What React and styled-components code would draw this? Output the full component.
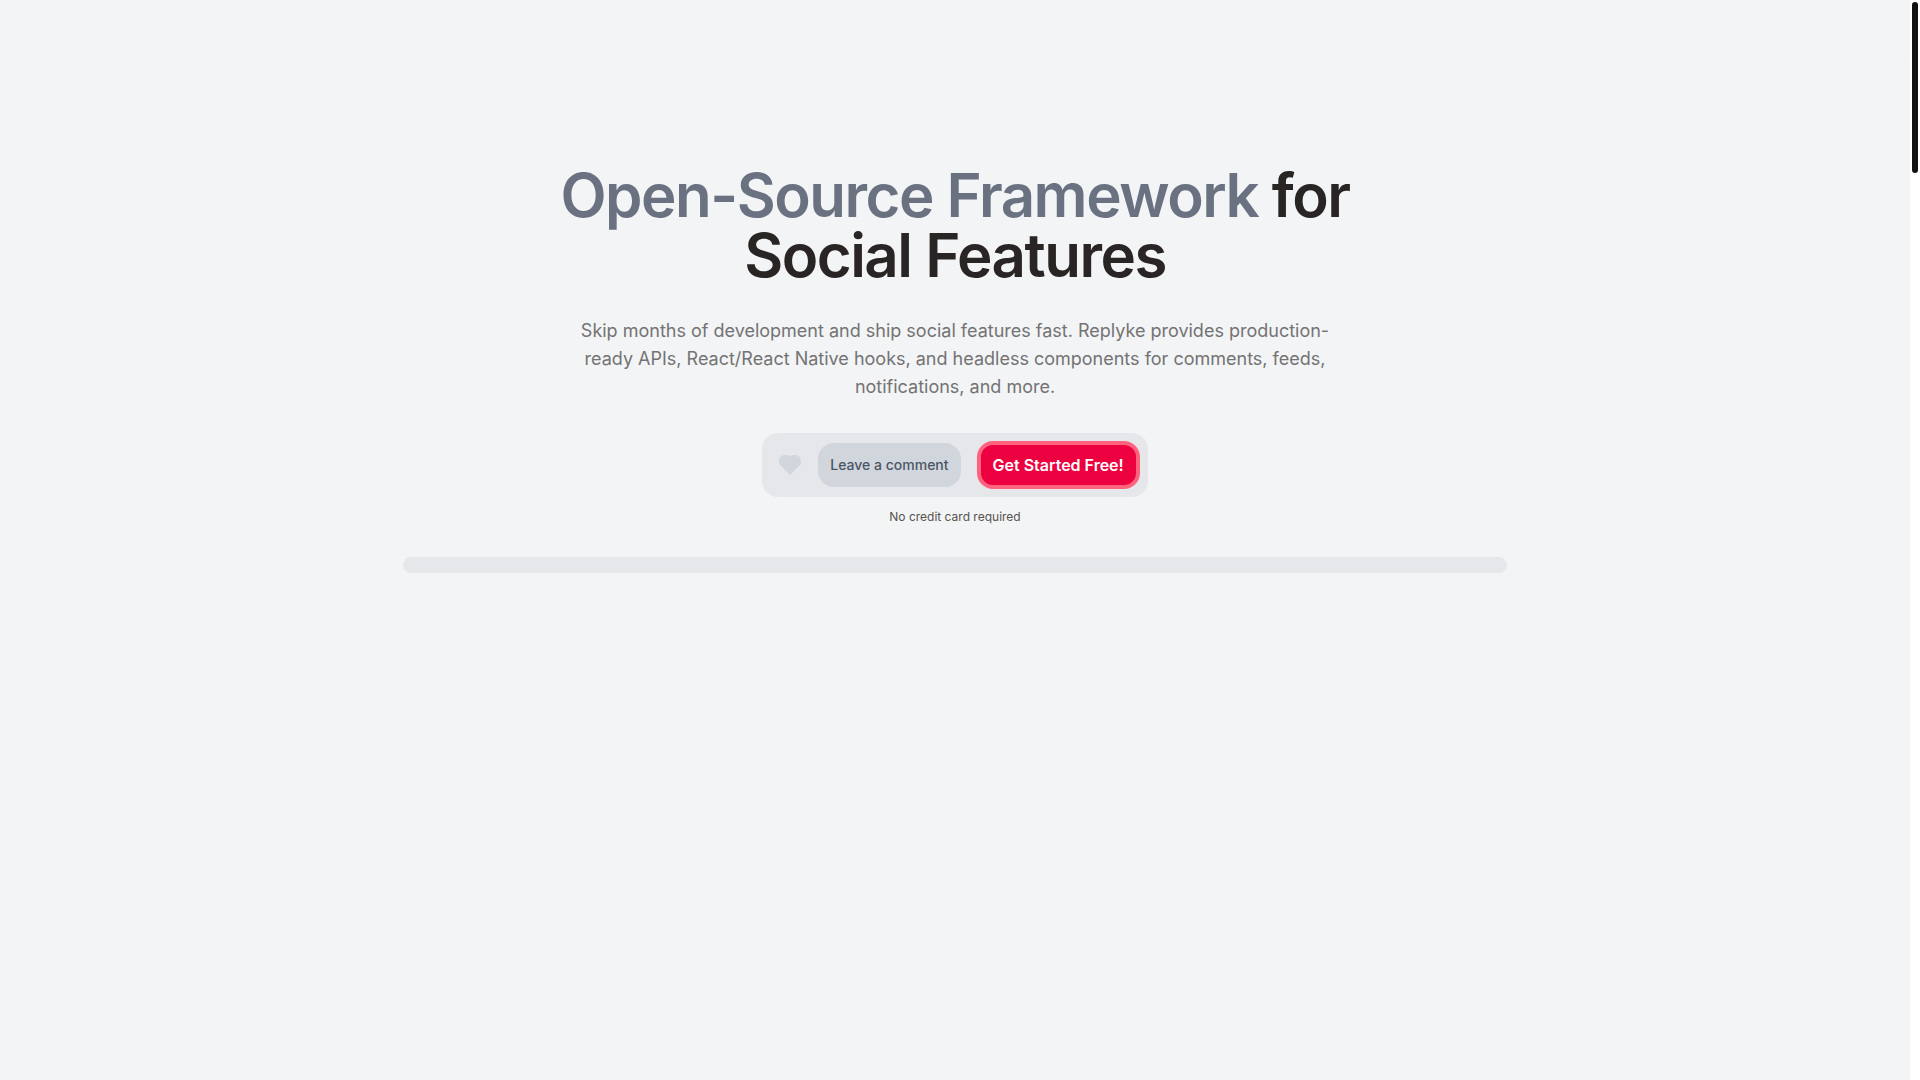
import React from "react";
import styled, { createGlobalStyle } from "styled-components";

const GlobalStyle = createGlobalStyle`
  *, *::before, *::after { box-sizing: border-box; }
  html { scrollbar-width: none; }
  body {
    margin: 0;
    background: #f3f4f6;
    font-family: Inter, "Liberation Sans", sans-serif;
    color: #292524;
  }
`;

const Page = styled.div`
  display: flex;
  min-height: 100vh;
`;

const Content = styled.div`
  flex: 1;
  display: flex;
  flex-direction: column;
`;

const ScrollTrack = styled.div`
  width: 10px;
  padding: 2px;
  background: #fff;
`;

const ScrollThumb = styled.div`
  height: 171px;
  border-radius: 3px;
  background: #111;
`;

const Header = styled.header`
  height: 64px;
  border-bottom: 1px solid #f1f2f4;
`;

const Hero = styled.main`
  display: flex;
  flex-direction: column;
  align-items: center;
  padding: 101px 24px 0;
`;

const Title = styled.h1`
  max-width: 896px;
  margin: 0;
  font-size: 60px;
  font-weight: 600;
  line-height: 60px;
  letter-spacing: -0.025em;
  text-align: center;
`;

const Accent = styled.span`
  color: #6a7282;
`;

const Lead = styled.p`
  max-width: 768px;
  margin: 32px 0 0;
  font-size: 18px;
  line-height: 28px;
  color: #737373;
  text-align: center;
`;

const Actions = styled.div`
  display: flex;
  align-items: center;
  gap: 16px;
  margin-top: 32px;
  padding: 8px;
  border-radius: 16px;
  background: #e5e7eb;
`;

const LikeButton = styled.button`
  display: flex;
  padding: 0 0 0 8px;
  border: 0;
  background: none;
  color: #d1d5dc;
`;

const CommentButton = styled.button`
  padding: 12px;
  border: 0;
  border-radius: 16px;
  background: #d1d5dc;
  color: #4a5565;
  font-family: inherit;
  font-size: 14px;
  font-weight: 500;
  line-height: 20px;
`;

const StartLink = styled.a`
  padding: 8px 12px;
  border: 4px solid #ff637e;
  border-radius: 16px;
  background: #ec003f;
  color: #fff;
  font-size: 16px;
  font-weight: 600;
  line-height: 24px;
  text-decoration: none;
`;

const Note = styled.p`
  margin: 12px 0 0;
  font-size: 12px;
  line-height: 16px;
  color: #57534d;
`;

const Preview = styled.div`
  width: 100%;
  max-width: 1104px;
  height: 16px;
  margin-top: 32px;
  border-radius: 8px;
  background: #e5e7eb;
`;

export default function App() {
  return (
    <Page>
      <GlobalStyle />
      <Content>
        <Header />
        <Hero>
          <Title>
            <Accent>Open-Source Framework</Accent> for
            <br />
            Social Features
          </Title>
          <Lead>
            Skip months of development and ship social features fast. Replyke
            provides production-ready APIs, React/React Native hooks, and
            headless components for comments, feeds, notifications, and more.
          </Lead>
          <Actions>
            <LikeButton type="button" aria-label="Like">
              <svg width="24" height="24" viewBox="0 0 24 24" fill="currentColor">
                <path d="M12 22 2.8 12.8A6 6 0 0 1 1 8.2C1 4.8 3.6 2 6.9 2 9 2 10.9 2.4 12 3.4 13.1 2.4 15 2 17.1 2 20.4 2 23 4.8 23 8.2a6 6 0 0 1-1.8 4.6L12 22Z" />
              </svg>
            </LikeButton>
            <CommentButton type="button">Leave a comment</CommentButton>
            <StartLink href="#start">Get Started Free!</StartLink>
          </Actions>
          <Note>No credit card required</Note>
          <Preview />
        </Hero>
      </Content>
      <ScrollTrack>
        <ScrollThumb />
      </ScrollTrack>
    </Page>
  );
}
